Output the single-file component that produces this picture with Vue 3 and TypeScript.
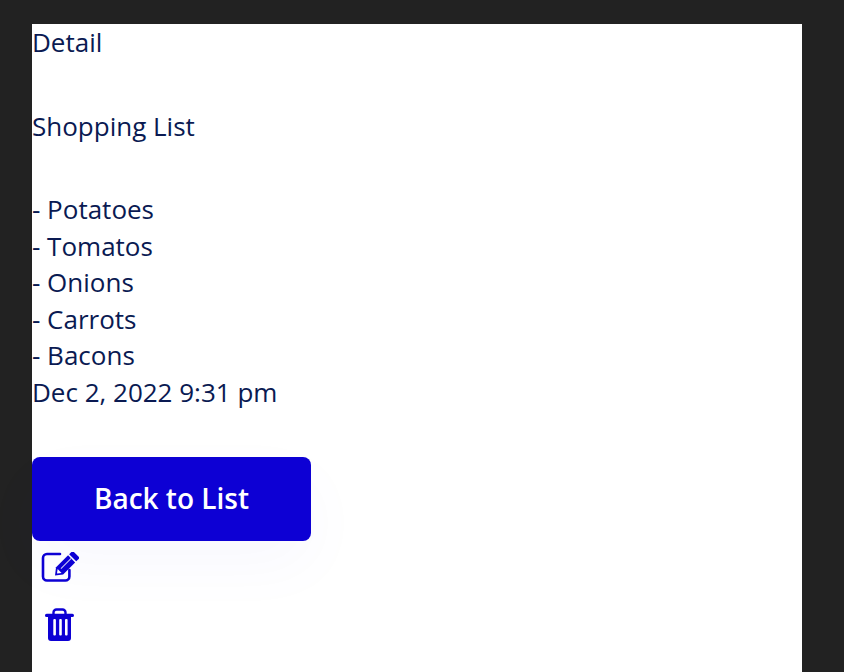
<script setup lang="ts">
const items = ['Potatoes', 'Tomatos', 'Onions', 'Carrots', 'Bacons']
</script>

<template>
  <div class="page">
    <div class="detail">
      <p class="line heading">Detail</p>
      <p class="line title">Shopping List</p>
      <div class="items">
        <p v-for="item in items" :key="item" class="line">- {{ item }}</p>
      </div>
      <p class="line">Dec 2, 2022 9:31 pm</p>
      <button class="back" type="button">Back to List</button>
      <a class="icon-link edit" aria-label="Edit">
        <svg width="38" height="32" viewBox="0 0 38 32" fill="none">
          <path d="M19 2H6a4 4 0 0 0-4 4v18.500a4 4 0 0 0 4 4h18.400a4 4 0 0 0 4-4V18" stroke="currentColor" stroke-width="2.600" stroke-linecap="round" />
          <g transform="translate(14 23.500) rotate(-45)">
            <path d="M0 0L6.500-5H23.500V5H6.500z" fill="currentColor" />
            <path d="M2.800 0L6.500-2.800V2.800z" fill="#fff" />
            <path d="M9-1.100H23.500V-.1H9z" fill="#c9c6f5" />
            <path d="M25-5H28.500a1.500 1.500 0 0 1 1.500 1.500V3.500a1.500 1.500 0 0 1-1.500 1.500H25z" fill="currentColor" />
          </g>
        </svg>
      </a>
      <a class="icon-link trash" aria-label="Delete">
        <svg width="30" height="34" viewBox="0 0 30 34" fill="none">
          <path d="M8.500 6.500V4.500A3 3 0 0 1 11.500 1.500h6a3 3 0 0 1 3 3v2" stroke="currentColor" stroke-width="2.400" />
          <rect x="0" y="5.800" width="29" height="3.200" rx="1.600" fill="currentColor" />
          <path d="M3 8h23v22a3 3 0 0 1-3 3H6a3 3 0 0 1-3-3z" fill="currentColor" />
          <rect x="8.300" y="11" width="2.600" height="16.500" rx="1" fill="#fff" />
          <rect x="14.200" y="11" width="2.600" height="16.500" rx="1" fill="#fff" />
          <rect x="20" y="11" width="2.600" height="16.500" rx="1" fill="#fff" />
        </svg>
      </a>
    </div>
  </div>
</template>

<style>
html,
body {
  margin: 0;
  background: #222222;
}
</style>

<style scoped>
.page {
  height: 672px;
  box-sizing: border-box;
  padding: 24px 42px 0 32px;
  overflow: hidden;
  font-family: "Open Sans", "Liberation Sans", sans-serif;
}

.detail {
  height: 100%;
  background: #ffffff;
  color: #0a1a52;
  font-size: 26px;
  line-height: 36.5px;
}

.line {
  margin: 0;
}

.heading {
  margin-bottom: 47px;
}

.title {
  margin-bottom: 47px;
}

.back {
  display: block;
  width: 279px;
  height: 84px;
  margin-top: 47px;
  padding: 0 0 2px;
  border: 0;
  border-radius: 8px;
  background: #0d00d4;
  box-shadow: 0 24px 64px rgba(13, 0, 212, 0.03);
  color: #ffffff;
  font-family: inherit;
  font-size: 28px;
  font-weight: 600;
}

.icon-link {
  display: block;
  color: #0d00d4;
  line-height: 0;
}

.edit {
  margin: 11px 0 0 9px;
}

.trash {
  margin: 24px 0 0 13px;
}
</style>
